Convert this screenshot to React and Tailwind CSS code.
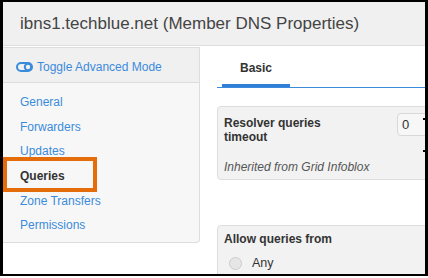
export default function App() {
  const items = ["General", "Forwarders", "Updates", "Queries", "Zone Transfers", "Permissions"];
  return (
    <div className="w-[428px] h-[278px] bg-white overflow-hidden font-['Liberation_Sans',Arial,sans-serif]">
      <div className="relative h-[276px] border-black border-t-2 border-l-[3px] border-r-[3px] border-b-2 flex flex-col overflow-hidden">
        <div className="h-[44px] shrink-0 bg-[#f0f0f0] border-b border-[#dedede] pl-[17px] flex items-center text-[17px] text-[#444]">
          ibns1.techblue.net (Member DNS Properties)
        </div>
        <div className="flex flex-1">
          <div className="w-[197px] shrink-0 self-start mt-[1px] h-[196px] bg-[#f7f7f7] border-t border-r border-b border-[#ddd] rounded-br-[4px]">
            <div className="h-[35px] bg-[#f0f0f0] border-b border-[#ddd] flex items-center pt-[3px] pl-[13px] gap-[4px] text-[12px] text-[#3b8bdc]">
              <svg width="17" height="10" viewBox="0 0 17 10" fill="none" stroke="#3b8bdc" strokeWidth="2">
                <rect x="1" y="1" width="15" height="8" rx="4" />
                <circle cx="12" cy="5" r="3.2" />
              </svg>
              <span>Toggle Advanced Mode</span>
            </div>
            <div className="pt-[7px] pl-[17px] text-[12px]">
              {items.map((t) => (
                <div
                  key={t}
                  className={
                    "h-[24.6px] flex items-center " +
                    (t === "Queries" ? "font-bold text-[#333]" : "text-[#3b8bdc]")
                  }
                >
                  {t}
                </div>
              ))}
            </div>
          </div>
          <div className="flex-1 pl-[17px] min-w-0">
            <div className="h-[42px] border-b border-[#3b8bdc] flex">
              <div className="ml-[5px] w-[68px] h-[41px] border-b-[3px] border-[#2f7fd6] text-center pt-[15px] text-[12px] leading-[14px] font-bold text-[#333]">
                Basic
              </div>
            </div>
            <div className="mt-[18px] w-[260px] h-[74px] border border-[#ddd] rounded-[4px] bg-[#f2f2f2] px-[6px]">
              <div className="flex">
                <div className="w-[173px] pt-[9px] font-bold text-[12px] leading-[14px] text-[#333]">
                  Resolver queries
                  <br />
                  timeout
                </div>
                <div className="mt-[6px] w-[60px] h-[23px] border border-[#d8d8d8] rounded-[4px] bg-[#f7f7f7] text-[13px] pl-[4px] flex items-center text-[#333]">
                  0
                </div>
              </div>
              <div className="mt-[16px] italic text-[12px] leading-[14px] text-[#555]">
                Inherited from Grid Infoblox
              </div>
            </div>
            <div className="mt-[45px] w-[260px] h-[80px] border border-[#ddd] rounded-[4px] bg-[#f2f2f2] px-[6px] pt-[6px]">
              <div className="font-bold text-[12px] leading-[14px] text-[#333]">Allow queries from</div>
              <div className="mt-[8px] flex items-center">
                <div className="ml-[5px] w-[13px] h-[13px] rounded-full border border-[#ccc] bg-[#e6e6e6]" />
                <span className="ml-[10px] text-[12.5px] text-[#333]">Any</span>
              </div>
            </div>
          </div>
        </div>
        <div className="absolute right-0 top-[116px] w-[2px] h-[2px] bg-black" />
        <div className="absolute right-0 top-[148px] w-[2px] h-[2px] bg-black" />
        <div className="absolute left-0 top-[155px] w-[94px] h-[35px] border-[4px] border-[#e46c0a]" />
      </div>
    </div>
  );
}
